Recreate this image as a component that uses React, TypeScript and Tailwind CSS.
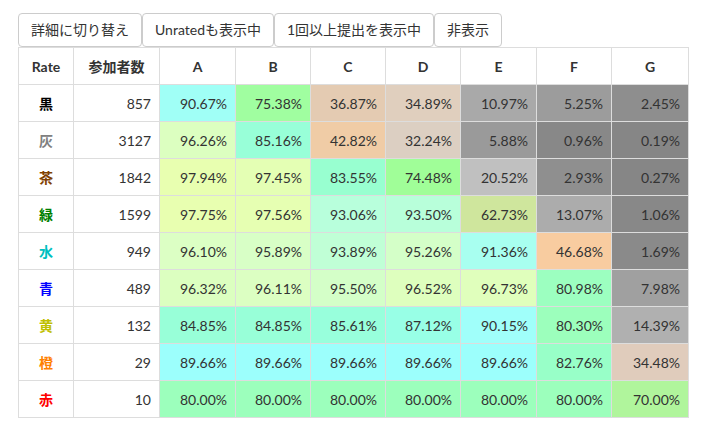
import React from "react";

const BUTTONS = ["詳細に切り替え", "Unratedも表示中", "1回以上提出を表示中", "非表示"];
const PROBLEMS = ["A", "B", "C", "D", "E", "F", "G"];

const ROWS: { label: string; color: string; count: number; cells: [string, string][] }[] = [
  {
    label: "黒", color: "text-[#000000]", count: 857,
    cells: [["90.67%", "bg-[#a0fff6]"], ["75.38%", "bg-[#a0fea0]"], ["36.87%", "bg-[#e4cbb2]"], ["34.89%", "bg-[#e0cfbe]"], ["10.97%", "bg-[#a9a9a9]"], ["5.25%", "bg-[#9c9c9c]"], ["2.45%", "bg-[#8e8e8e]"]],
  },
  {
    label: "灰", color: "text-[#808080]", count: 3127,
    cells: [["96.26%", "bg-[#dcffc0]"], ["85.16%", "bg-[#98ffd8]"], ["42.82%", "bg-[#f0cca6]"], ["32.24%", "bg-[#dccfc2]"], ["5.88%", "bg-[#9a9a9a]"], ["0.96%", "bg-[#888888]"], ["0.19%", "bg-[#868686]"]],
  },
  {
    label: "茶", color: "text-[#804000]", count: 1842,
    cells: [["97.94%", "bg-[#e8ffb0]"], ["97.45%", "bg-[#e4ffb4]"], ["83.55%", "bg-[#98ffd0]"], ["74.48%", "bg-[#a0fe98]"], ["20.52%", "bg-[#c0c0c0]"], ["2.93%", "bg-[#8f8f8f]"], ["0.27%", "bg-[#868686]"]],
  },
  {
    label: "緑", color: "text-[#008000]", count: 1599,
    cells: [["97.75%", "bg-[#e8ffb0]"], ["97.56%", "bg-[#e6ffb2]"], ["93.06%", "bg-[#b8ffdc]"], ["93.50%", "bg-[#b8ffda]"], ["62.73%", "bg-[#cfe69d]"], ["13.07%", "bg-[#acacac]"], ["1.06%", "bg-[#888888]"]],
  },
  {
    label: "水", color: "text-[#00c0c0]", count: 949,
    cells: [["96.10%", "bg-[#dcffc4]"], ["95.89%", "bg-[#d8ffc6]"], ["93.89%", "bg-[#c0ffd6]"], ["95.26%", "bg-[#d4ffc8]"], ["91.36%", "bg-[#a8fff0]"], ["46.68%", "bg-[#f8cca0]"], ["1.69%", "bg-[#8a8a8a]"]],
  },
  {
    label: "青", color: "text-[#0000ff]", count: 489,
    cells: [["96.32%", "bg-[#dcffc0]"], ["96.11%", "bg-[#dcffc2]"], ["95.50%", "bg-[#d4ffc8]"], ["96.52%", "bg-[#deffbe]"], ["96.73%", "bg-[#e0ffbc]"], ["80.98%", "bg-[#9cffc0]"], ["7.98%", "bg-[#a0a0a0]"]],
  },
  {
    label: "黄", color: "text-[#c0c000]", count: 132,
    cells: [["84.85%", "bg-[#98ffd8]"], ["84.85%", "bg-[#98ffd8]"], ["85.61%", "bg-[#98ffdc]"], ["87.12%", "bg-[#98ffe6]"], ["90.15%", "bg-[#a0fffa]"], ["80.30%", "bg-[#9cffbc]"], ["14.39%", "bg-[#b0b0b0]"]],
  },
  {
    label: "橙", color: "text-[#ff8000]", count: 29,
    cells: [["89.66%", "bg-[#9cfffc]"], ["89.66%", "bg-[#9cfffc]"], ["89.66%", "bg-[#9cfffc]"], ["89.66%", "bg-[#9cfffc]"], ["89.66%", "bg-[#9cfffc]"], ["82.76%", "bg-[#98ffc8]"], ["34.48%", "bg-[#e0ccbc]"]],
  },
  {
    label: "赤", color: "text-[#ff0000]", count: 10,
    cells: [["80.00%", "bg-[#9cffbc]"], ["80.00%", "bg-[#9cffbc]"], ["80.00%", "bg-[#9cffbc]"], ["80.00%", "bg-[#9cffbc]"], ["80.00%", "bg-[#9cffbc]"], ["80.00%", "bg-[#9cffbc]"], ["70.00%", "bg-[#b0f59c]"]],
  },
];

const COL_WIDTHS = ["w-[55px]", "w-[86px]", "w-[76px]", "w-[75px]", "w-[75px]", "w-[75px]", "w-[76px]", "w-[75px]", "w-[77px]"];

export default function App() {
  return (
    <div className="min-h-[436px] bg-white px-[18px] pt-[13px] text-[14px] text-[#333] font-['Lato','Noto_Sans_CJK_JP',sans-serif]">
      <div className="flex">
        {BUTTONS.map(b => (
          <button key={b} className="h-[34px] border border-[#ccc] rounded-[4px] bg-white px-3 leading-5 text-[#333]">
            {b}
          </button>
        ))}
      </div>
      <table className="table-fixed border-collapse w-[671px]">
        <colgroup>
          {COL_WIDTHS.map((w, i) => <col key={i} className={w} />)}
        </colgroup>
        <thead>
          <tr>
            <th className="border border-[#ddd] h-[37px] text-center font-bold">Rate</th>
            <th className="border border-[#ddd] text-center font-bold">参加者数</th>
            {PROBLEMS.map(p => (
              <th key={p} className="border border-[#ddd] text-center font-bold">{p}</th>
            ))}
          </tr>
        </thead>
        <tbody>
          {ROWS.map(r => (
            <tr key={r.label}>
              <td className={`border border-[#ddd] h-[37px] text-center font-bold ${r.color}`}>{r.label}</td>
              <td className="border border-[#ddd] text-right pr-2">{r.count}</td>
              {r.cells.map(([v, bg], i) => (
                <td key={i} className={`border border-[#ddd] text-right pr-2 ${bg}`}>{v}</td>
              ))}
            </tr>
          ))}
        </tbody>
      </table>
    </div>
  );
}
